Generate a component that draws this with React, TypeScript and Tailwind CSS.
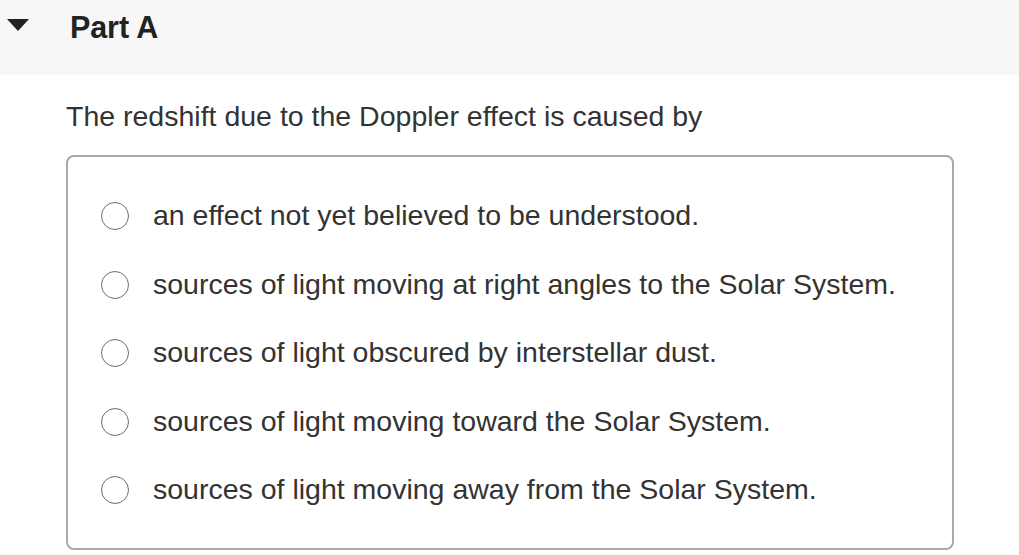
import React from "react";

const options = [
  "an effect not yet believed to be understood.",
  "sources of light moving at right angles to the Solar System.",
  "sources of light obscured by interstellar dust.",
  "sources of light moving toward the Solar System.",
  "sources of light moving away from the Solar System.",
];

function Caret() {
  return (
    <svg width="22" height="12" viewBox="0 0 22 12" className="block">
      <polygon points="0,0 22,0 11,12" fill="#222222" />
    </svg>
  );
}

export default function App() {
  return (
    <div
      className="w-[1019px] h-[555px] bg-white overflow-hidden"
      style={{ fontFamily: '"Liberation Sans", Arial, sans-serif' }}
    >
      <div className="h-[75px] bg-[#f7f7f7] flex items-start">
        <div className="ml-[7px] mt-[19px]">
          <Caret />
        </div>
        <div className="ml-[41px] mt-[10px] text-[30.5px] leading-[34px] font-bold text-[#222222] tracking-[-0.1px]">
          Part A
        </div>
      </div>

      <div className="ml-[66px] mt-[25px] text-[28.5px] leading-[33px] text-[#333333]">
        The redshift due to the Doppler effect is caused by
      </div>

      <div className="ml-[66px] mt-[22px] w-[888px] h-[395px] border-2 border-[#a9a9a9] rounded-[8px] pl-[33px] pt-[40px] flex flex-col gap-[35.5px]">
        {options.map((text) => (
          <label key={text} className="flex items-start h-[33px] cursor-pointer">
            <span className="mt-[5px] w-[28px] h-[28px] rounded-full border border-[#6e6e6e] bg-white shrink-0" />
            <span className="ml-[24px] mt-[2px] text-[28.5px] leading-[33px] text-[#333333] whitespace-nowrap">
              {text}
            </span>
          </label>
        ))}
      </div>
    </div>
  );
}
